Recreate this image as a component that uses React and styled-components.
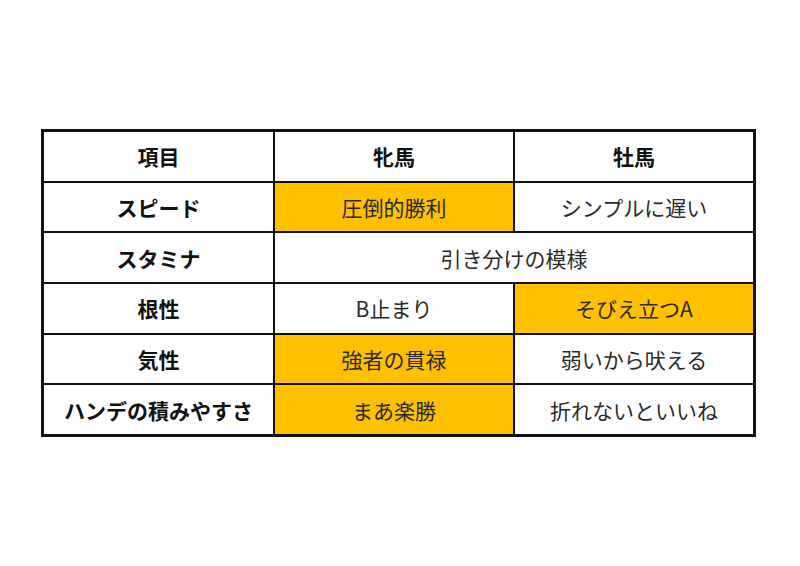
import styled, { createGlobalStyle } from "styled-components";

const Global = createGlobalStyle`
    html, body {
        margin: 0;
        padding: 0;
        background: #ffffff;
    }
    body {
        font-family: "Noto Sans CJK JP", "Noto Sans", sans-serif;
        color: #1f1f1f;
    }
`;

const Page = styled.div`
    width: 800px;
    height: 566px;
    padding: 129px 0 0 41px;
    box-sizing: border-box;
`;

const Table = styled.div`
    display: grid;
    grid-template-columns: 229px 238px 238px;
    grid-auto-rows: 1fr;
    gap: 2px;
    width: 715px;
    height: 308px;
    padding: 3px;
    box-sizing: border-box;
    background: #111111;
`;

const Cell = styled.div`
    display: flex;
    align-items: center;
    justify-content: center;
    background: ${(p) => (p.$hi ? "#ffc000" : "#ffffff")};
    grid-column: ${(p) => (p.$span ? `span ${p.$span}` : "auto")};
    font-size: 21px;
    font-weight: ${(p) => (p.$bold ? 700 : 400)};
    color: ${(p) => (p.$bold ? "#111111" : "#2a2a2a")};
`;

const rows = [
    { label: "スピード", cells: [{ t: "圧倒的勝利", hi: true }, { t: "シンプルに遅い" }] },
    { label: "スタミナ", cells: [{ t: "引き分けの模様", span: 2 }] },
    { label: "根性", cells: [{ t: "B止まり" }, { t: "そびえ立つA", hi: true }] },
    { label: "気性", cells: [{ t: "強者の貫禄", hi: true }, { t: "弱いから吠える" }] },
    { label: "ハンデの積みやすさ", cells: [{ t: "まあ楽勝", hi: true }, { t: "折れないといいね" }] },
];

const App = () => {
    return (
        <Page>
            <Global />
            <Table>
                <Cell $bold>項目</Cell>
                <Cell $bold>牝馬</Cell>
                <Cell $bold>牡馬</Cell>
                {rows.map((r) => [
                    <Cell key={r.label} $bold>{r.label}</Cell>,
                    ...r.cells.map((c, i) => (
                        <Cell key={r.label + i} $hi={c.hi} $span={c.span}>{c.t}</Cell>
                    )),
                ])}
            </Table>
        </Page>
    );
};

export default App;
